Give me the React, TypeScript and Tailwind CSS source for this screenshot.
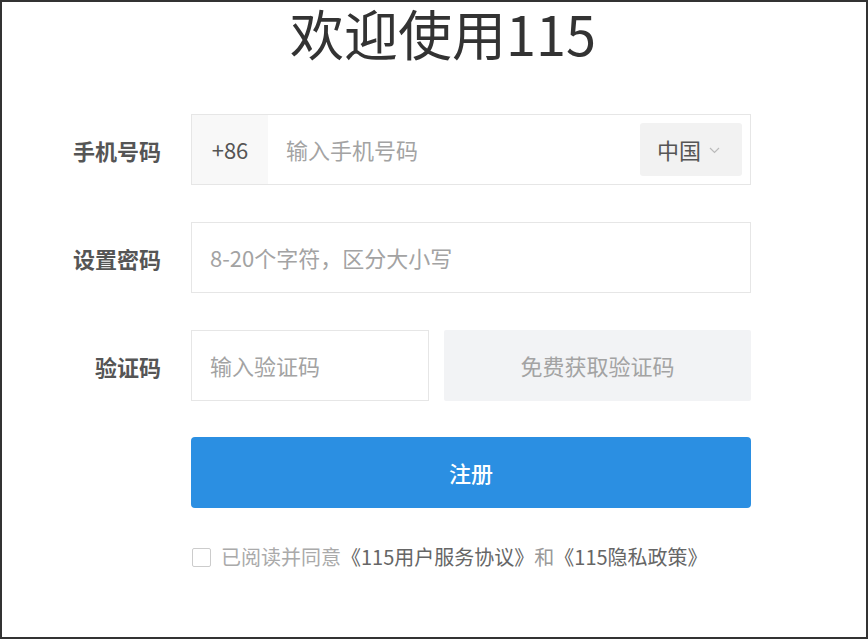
const font = { fontFamily: '"Noto Sans CJK SC", "Noto Sans", sans-serif' };

const Label = ({ text }: { text: string }) => (
  <div className="w-[159px] shrink-0 text-right text-[22px] font-bold text-[#555] leading-none">
    {text}
  </div>
);

export default function App() {
  return (
    <div
      className="w-[868px] h-[639px] border-2 border-[#333] bg-white overflow-hidden"
      style={font}
    >
      {/* Title */}
      <h1 className="text-center text-[54px] leading-[62px] text-[#333] font-normal pl-[18px]">
        欢迎使用115
      </h1>

      <div className="mt-[50px] flex flex-col">
        {/* Phone */}
        <div className="flex items-center">
          <Label text="手机号码" />
          <div className="ml-[30px] w-[560px] h-[71px] border border-[#e6e6e6] flex items-stretch">
            <div className="w-[76px] bg-[#f8f8f8] flex items-center justify-center text-[22px] text-[#555]">
              +86
            </div>
            <div className="flex-1 flex items-center pl-[18px] text-[22px] text-[#a3a3a3]">
              输入手机号码
            </div>
            <div className="my-[8px] mr-[8px] w-[102px] rounded-[3px] bg-[#f2f2f2] flex items-center pl-[17px] gap-[8px] text-[22px] text-[#555]">
              <span>中国</span>
              <svg width="11" height="7" viewBox="0 0 11 7" fill="none" className="mt-[2px]">
                <path d="M1 1l4.5 4.5L10 1" stroke="#bbb" strokeWidth="1.2" />
              </svg>
            </div>
          </div>
        </div>

        {/* Password */}
        <div className="mt-[37px] flex items-center">
          <Label text="设置密码" />
          <div className="ml-[30px] w-[560px] h-[71px] border border-[#e6e6e6] flex items-center pl-[18px] text-[22px] text-[#a3a3a3]">
            8-20个字符，区分大小写
          </div>
        </div>

        {/* Code */}
        <div className="mt-[37px] flex items-center">
          <Label text="验证码" />
          <div className="ml-[30px] w-[238px] h-[71px] border border-[#e6e6e6] flex items-center pl-[18px] text-[22px] text-[#a3a3a3]">
            输入验证码
          </div>
          <div className="ml-[15px] w-[307px] h-[71px] bg-[#f2f3f5] rounded-[2px] flex items-center justify-center text-[22px] text-[#a3a3a3]">
            免费获取验证码
          </div>
        </div>

        {/* Submit */}
        <div className="mt-[36px] ml-[189px] w-[560px] h-[71px] rounded-[4px] bg-[#2b8fe2] flex items-center justify-center text-[22px] text-white font-medium">
          注册
        </div>

        {/* Agreement */}
        <div className="mt-[39px] ml-[190px] flex items-center text-[20px] leading-none">
          <div className="w-[19px] h-[19px] border border-[#ccc] rounded-[2px] bg-white" />
          <span className="ml-[10px] text-[#aaa]">已阅读并同意</span>
          <span className="text-[#666]">《115用户服务协议》</span>
          <span className="text-[#999]">和</span>
          <span className="text-[#666]">《115隐私政策》</span>
        </div>
      </div>
    </div>
  );
}
